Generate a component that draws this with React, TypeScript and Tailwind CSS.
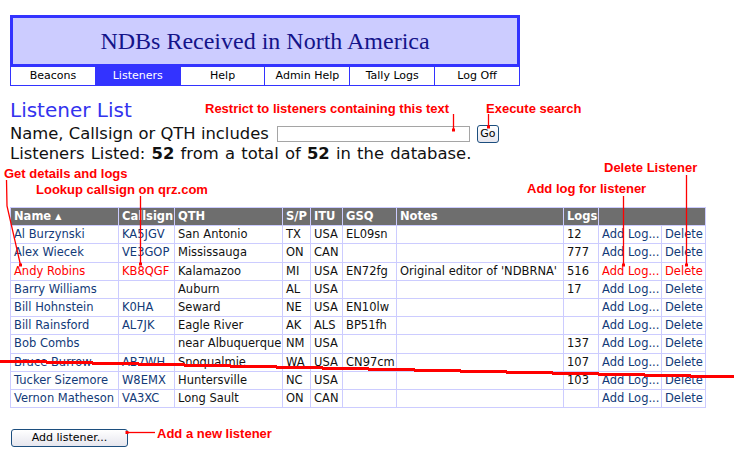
import React from "react";

type Row = {
  name: string;
  call: string;
  qth: string;
  sp: string;
  itu: string;
  gsq: string;
  notes: string;
  logs: string;
  hot?: boolean;
};

const rows: Row[] = [
  { name: "Al Burzynski", call: "KA5JGV", qth: "San Antonio", sp: "TX", itu: "USA", gsq: "EL09sn", notes: "", logs: "12" },
  { name: "Alex Wiecek", call: "VE3GOP", qth: "Mississauga", sp: "ON", itu: "CAN", gsq: "", notes: "", logs: "777" },
  { name: "Andy Robins", call: "KB8QGF", qth: "Kalamazoo", sp: "MI", itu: "USA", gsq: "EN72fg", notes: "Original editor of 'NDBRNA'", logs: "516", hot: true },
  { name: "Barry Williams", call: "", qth: "Auburn", sp: "AL", itu: "USA", gsq: "", notes: "", logs: "17" },
  { name: "Bill Hohnstein", call: "K0HA", qth: "Seward", sp: "NE", itu: "USA", gsq: "EN10lw", notes: "", logs: "" },
  { name: "Bill Rainsford", call: "AL7JK", qth: "Eagle River", sp: "AK", itu: "ALS", gsq: "BP51fh", notes: "", logs: "" },
  { name: "Bob Combs", call: "", qth: "near Albuquerque", sp: "NM", itu: "USA", gsq: "", notes: "", logs: "137" },
  { name: "Bruce Burrow", call: "AB7WH", qth: "Snoqualmie", sp: "WA", itu: "USA", gsq: "CN97cm", notes: "", logs: "107" },
  { name: "Tucker Sizemore", call: "W8EMX", qth: "Huntersville", sp: "NC", itu: "USA", gsq: "", notes: "", logs: "103" },
  { name: "Vernon Matheson", call: "VA3XC", qth: "Long Sault", sp: "ON", itu: "CAN", gsq: "", notes: "", logs: "" },
];

const navItems = ["Beacons", "Listeners", "Help", "Admin Help", "Tally Logs", "Log Off"];

const cell = "border border-[#ccccff] px-[3px] py-0 h-[18.2px] leading-[17px] whitespace-nowrap overflow-hidden text-left font-normal";
const head = "border border-[#ccccff] px-[3px] py-0 h-[18.2px] leading-[17px] whitespace-nowrap overflow-hidden text-left font-bold text-white";

// annotation leader lines: [x1, y1, x2, y2]
const leaders: number[][] = [
  [453.5, 114, 453.5, 130],
  [488.5, 114, 488.5, 127],
  [140.5, 196, 140.5, 264],
  [623.5, 196, 623.5, 265],
  [686.5, 175, 686.5, 265],
  [127, 432.5, 155, 432.5],
];

const dots: number[][] = [
  [453.5, 130],
  [488.5, 127],
  [20.5, 265],
  [140.5, 264],
  [623.5, 265],
  [686.5, 265],
  [127, 432.5],
];

function Note({ left, top, children }: { left: number; top: number; children: React.ReactNode }) {
  return (
    <div
      className="absolute whitespace-nowrap font-['Liberation_Sans',Arial,sans-serif] text-[13px] leading-[13px] font-bold text-[#ff0000]"
      style={{ left, top }}
    >
      {children}
    </div>
  );
}

export default function App() {
  return (
    <div className="relative w-[734px] h-[459px] overflow-hidden bg-white text-[#111] font-['DejaVu_Sans',Verdana,sans-serif]">
      <div className="pl-[10px] pt-[15px]">
        {/* site header */}
        <div className="w-[510px]">
          <div className="h-[52px] border-[3px] border-[#3333ff] bg-[#ccccff] flex items-center justify-center">
            <span className="font-['Liberation_Serif','Times_New_Roman',serif] text-[24px] leading-none text-[#14148a]">
              NDBs Received in North America
            </span>
          </div>
          <div className="flex border-x border-b border-[#3333ff]">
            {navItems.map((n, i) => (
              <div
                key={n}
                className={
                  "h-[18px] leading-[18px] text-center text-[11px] " +
                  (i === 0 ? "w-[84px] " : "w-[85px] border-l border-[#3333ff] ") +
                  (n === "Listeners" ? "bg-[#3333ff] text-white" : "text-black")
                }
              >
                {n}
              </div>
            ))}
          </div>
        </div>

        <h1 className="mt-[12px] text-[20px] leading-[24px] text-[#3333ee]">Listener List</h1>

        <div className="mt-[2px] flex items-center h-[20px] text-[16.4px] leading-[20px]">
          <span>Name, Callsign or QTH includes</span>
          <input className="ml-[8px] w-[193px] h-[16px] border border-[#a5a5a5] bg-white" />
          <button className="ml-[7px] w-[22px] h-[18px] rounded-[3px] border border-[#1c4e7e] bg-gradient-to-b from-white to-[#e6e6ee] text-[11px] leading-[16px] text-black">
            Go
          </button>
        </div>
        <div className="text-[16.4px] leading-[20px] [word-spacing:1px]">
          Listeners Listed: <b>52</b> from a total of <b>52</b> in the database.
        </div>

        <table className="mt-[43px] table-fixed border-collapse w-[695px] text-[11.5px]">
          <colgroup>
            <col className="w-[108px]" />
            <col className="w-[56px]" />
            <col className="w-[108px]" />
            <col className="w-[28px]" />
            <col className="w-[32px]" />
            <col className="w-[54px]" />
            <col className="w-[167px]" />
            <col className="w-[35px]" />
            <col className="w-[63px]" />
            <col className="w-[44px]" />
          </colgroup>
          <thead>
            <tr className="bg-[#6e6e6e]">
              <th className={head}>
                Name <span className="text-[8px] align-[1px]">▲</span>
              </th>
              <th className={head}>Callsign</th>
              <th className={head}>QTH</th>
              <th className={head}>S/P</th>
              <th className={head}>ITU</th>
              <th className={head}>GSQ</th>
              <th className={head}>Notes</th>
              <th className={head}>Logs</th>
              <th className={head} colSpan={2}></th>
            </tr>
          </thead>
          <tbody>
            {rows.map((r) => {
              const link = r.hot ? "text-[#ff0000]" : "text-[#123a78]";
              return (
                <tr key={r.name}>
                  <td className={cell + " " + link}>{r.name}</td>
                  <td className={cell + " " + link}>{r.call}</td>
                  <td className={cell}>{r.qth}</td>
                  <td className={cell}>{r.sp}</td>
                  <td className={cell}>{r.itu}</td>
                  <td className={cell}>{r.gsq}</td>
                  <td className={cell}>{r.notes}</td>
                  <td className={cell}>{r.logs}</td>
                  <td className={cell + " " + link}>Add Log...</td>
                  <td className={cell + " " + link}>Delete</td>
                </tr>
              );
            })}
          </tbody>
        </table>

        <button className="mt-[21px] ml-[1px] w-[117px] h-[18px] rounded-[3px] border border-[#1c4e7e] bg-gradient-to-b from-white to-[#e6e6ee] text-[11px] leading-[16px] text-black">
          Add listener...
        </button>
      </div>

      {/* help annotations */}
      <Note left={205} top={102}>Restrict to listeners containing this text</Note>
      <Note left={486} top={102}>Execute search</Note>
      <Note left={4} top={167}>Get details and logs</Note>
      <Note left={36} top={183}>Lookup callsign on qrz.com</Note>
      <Note left={604} top={161}>Delete Listener</Note>
      <Note left={527} top={182}>Add log for listener</Note>
      <Note left={157} top={427}>Add a new listener</Note>

      <svg className="absolute inset-0 pointer-events-none" width={734} height={459}>
        {leaders.map(([x1, y1, x2, y2], i) => (
          <line key={i} x1={x1} y1={y1} x2={x2} y2={y2} stroke="#ff0000" strokeWidth={1.3} />
        ))}
        <polyline points="6.5,180 7,206 20.5,265" fill="none" stroke="#ff0000" strokeWidth={1.3} />
        {dots.map(([x, y], i) => (
          <rect key={i} x={x - 1.5} y={y - 1.5} width={3} height={3} fill="#ff0000" />
        ))}
        {/* torn edge across the table */}
        {Array.from({ length: 17 }).map((_, i) => (
          <rect key={i} x={i * 46} y={360 + i} width={47} height={3} fill="#ff0000" />
        ))}
      </svg>
    </div>
  );
}
